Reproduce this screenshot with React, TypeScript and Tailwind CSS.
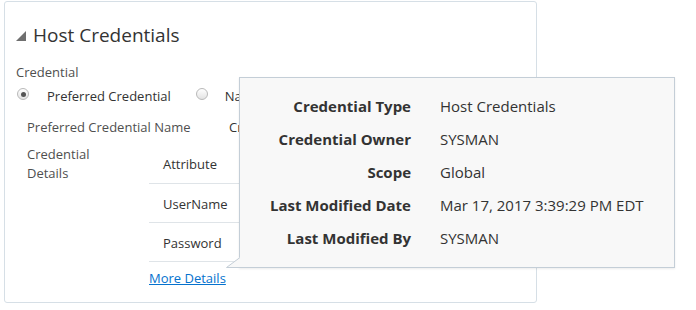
import React from 'react';

const details = [
  { label: 'Credential Type', value: 'Host Credentials' },
  { label: 'Credential Owner', value: 'SYSMAN' },
  { label: 'Scope', value: 'Global' },
  { label: 'Last Modified Date', value: 'Mar 17, 2017 3:39:29 PM EDT' },
  { label: 'Last Modified By', value: 'SYSMAN' },
];

const Radio = ({ checked }: { checked?: boolean }) => (
  <span className="flex h-[12px] w-[12px] items-center justify-center rounded-full border border-[#b9b9b9] bg-gradient-to-b from-[#ffffff] to-[#e3e3e3]">
    {checked && <span className="h-[5px] w-[5px] rounded-full bg-[#555]" />}
  </span>
);

const App = () => {
  return (
    <div className="relative h-[310px] w-[696px] bg-white font-['Open_Sans',sans-serif] text-[#333]">
      <section className="ml-[4px] mt-[1px] h-[302px] w-[533px] rounded-[3px] border border-[#d6dfe6] pl-[11px] pt-[20px]">
        <h2 className="flex items-center gap-[7px] text-[19px] leading-[26px] text-[#333]">
          <svg width="10" height="10" viewBox="0 0 10 10" className="mt-[2px]">
            <path d="M10 0 L10 10 L0 10 Z" fill="#6f6f6f" />
          </svg>
          Host Credentials
        </h2>

        <div className="mt-[16px] text-[13px] leading-[16px] text-[#4f4f4f]">Credential</div>
        {/* the popup covers the rest of these rows */}
        <div className="mt-[7px] flex w-[223px] items-center overflow-hidden whitespace-nowrap text-[13px] leading-[18px] text-[#333]">
          <span className="ml-[1px] -mt-[4px] shrink-0"><Radio checked /></span>
          <span className="ml-[18px]">Preferred Credential</span>
          <span className="ml-[25px] -mt-[4px] shrink-0"><Radio /></span>
          <span className="ml-[17px]">Named Credential</span>
        </div>

        <div className="mt-[13px] ml-[11px] flex w-[212px] overflow-hidden whitespace-nowrap text-[13px] leading-[18px] text-[#4f4f4f]">
          <span className="w-[202px] shrink-0">Preferred Credential Name</span>
          <span className="text-[#333]">Credential</span>
        </div>

        <div className="mt-[9px] ml-[11px] flex">
          <div className="w-[122px] text-[13px] leading-[19px] text-[#4f4f4f]">
            Credential
            <br />
            Details
          </div>
          <div>
            <div className="w-[260px] text-[13px] text-[#333]">
              <div className="flex h-[39px] items-center border-b border-[#dfe4e8] pl-[14px] pt-[1px]">Attribute</div>
              <div className="flex h-[39px] items-center border-b border-[#dfe4e8] pl-[14px] pt-[3px]">UserName</div>
              <div className="flex h-[39px] items-center border-b border-[#dfe4e8] pl-[14px] pt-[3px]">Password</div>
            </div>
            <a className="mt-[7px] block text-[13px] leading-[18px] text-[#0572ce] underline">More Details</a>
          </div>
        </div>
      </section>

      <div className="absolute left-[239px] top-[76px] h-[191px] w-[436px] border border-[#c4ced7] bg-[#f8f8f8] pt-[12px] shadow-[0_1px_2px_rgba(0,0,0,0.08)]">
        {details.map((d) => (
          <div key={d.label} className="flex h-[33px] items-center text-[15px]">
            <span className="w-[171px] text-right font-bold text-[#333]">{d.label}</span>
            <span className="ml-[29px] text-[#333]">{d.value}</span>
          </div>
        ))}
        <svg className="absolute bottom-[-1px] left-[-14px]" width="15" height="11" viewBox="0 0 15 11">
          <path d="M14 0 L0 10.5 L15 10.5" fill="#f8f8f8" />
          <path d="M14 0.5 L0.5 10.5 L15 10.5" fill="none" stroke="#c4ced7" strokeWidth="1" />
        </svg>
      </div>
    </div>
  );
};

export default App;
